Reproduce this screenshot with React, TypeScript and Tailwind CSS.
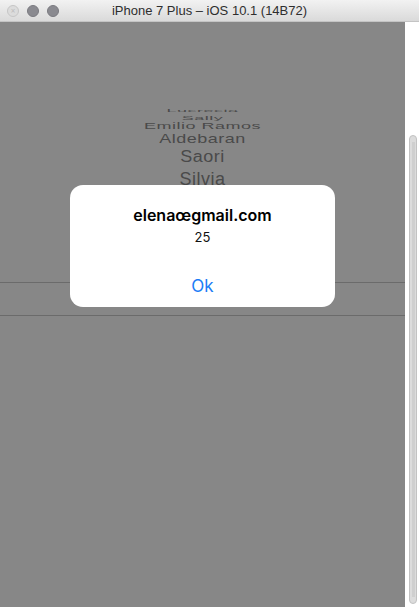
const PICKER_ROWS = [
  { label: "Lucrecia", h: "h-[6px]", scale: "scale-y-[0.15]" },
  { label: "Sally", h: "h-[7px]", scale: "scale-y-[0.3]" },
  { label: "Emilio Ramos", h: "h-[10px]", scale: "scale-y-[0.5]" },
  { label: "Aldebaran", h: "h-[16px]", scale: "scale-y-[0.7]" },
  { label: "Saori", h: "h-[20px]", scale: "scale-y-[0.88]" },
  { label: "Silvia", h: "h-[24px]", scale: "scale-y-[0.97]" },
];

function TitleBar() {
  return (
    <div className="relative flex h-[22px] items-center bg-gradient-to-b from-[#f2f2f2] to-[#dadada] border-b border-[#c4c4c4]">
      {/* Window controls */}
      <div className="flex items-center gap-[8px] pl-[7px]">
        <span className="h-[12px] w-[12px] rounded-full bg-[#dcdcdc] border border-[#c6c6c6] flex items-center justify-center text-[8px] leading-none text-[#bdbdbd]">
          ×
        </span>
        <span className="h-[12px] w-[12px] rounded-full bg-[#8a8a90] border border-[#7a7a80]" />
        <span className="h-[12px] w-[12px] rounded-full bg-[#8a8a90] border border-[#7a7a80]" />
      </div>
      <div className="absolute inset-0 flex items-center justify-center text-[13px] text-[#2e2e2e] font-['Liberation_Sans',sans-serif]">
        iPhone 7 Plus – iOS 10.1 (14B72)
      </div>
    </div>
  );
}

function Picker() {
  return (
    <div className="flex flex-col items-center pt-[86px] font-['Liberation_Sans',sans-serif] text-[#4a4a4a]">
      {PICKER_ROWS.map((row) => (
        <div key={row.label} className={`${row.h} flex items-center justify-center overflow-visible`}>
          <span className={`text-[18px] leading-none tracking-[0.5px] whitespace-nowrap ${row.scale}`}>
            {row.label}
          </span>
        </div>
      ))}
      <div className="h-[91px]" />
      {/* selection lines */}
      <div className="w-[405px] h-[34px] border-y border-[#6b6b6b]" />
    </div>
  );
}

function Alert() {
  return (
    <div className="absolute left-[70px] top-[163px] w-[265px] h-[122px] rounded-[13px] bg-white flex flex-col items-center font-['Inter',sans-serif]">
      <div className="pt-[20px] h-[41px] text-[16px] leading-[21px] font-semibold text-black">
        elenaœgmail.com
      </div>
      <div className="mt-[3px] h-[16px] text-[13px] leading-[16px] text-[#111]">25</div>
      <div className="mt-[21px] h-[41px] w-full flex items-center justify-center text-[17px] text-[#1a7cf6]">
        Ok
      </div>
    </div>
  );
}

export default function App() {
  return (
    <div className="w-[419px] h-[607px] flex flex-col overflow-hidden bg-white">
      <TitleBar />
      <div className="flex flex-1">
        {/* Simulator screen */}
        <div className="relative w-[405px] bg-[#878787] overflow-hidden">
          <Picker />
          <Alert />
        </div>
        {/* Scrollbar gutter */}
        <div className="flex-1 bg-white pl-[4px] pt-[113px] pb-[3px]">
          <div className="h-full w-[8px] rounded-full border border-[#c2c2c2] bg-[#dcdcdc] flex justify-center">
            <div className="w-[3px] bg-[#cfcfcf] my-[6px]" />
          </div>
        </div>
      </div>
    </div>
  );
}
